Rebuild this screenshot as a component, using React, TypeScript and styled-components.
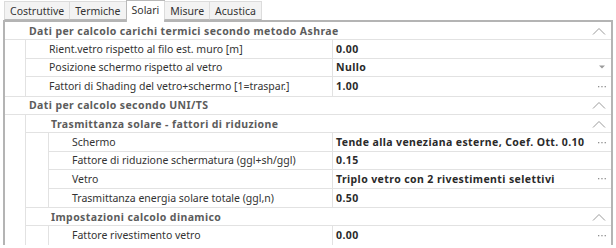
import React from "react";
import styled, { createGlobalStyle } from "styled-components";

const GlobalStyle = createGlobalStyle`
  html, body {
    margin: 0;
    padding: 0;
    background: #ffffff;
  }
  body {
    font-family: "Noto Sans", "DejaVu Sans", sans-serif;
    font-size: 10.5px;
    color: #333333;
  }
`;

const ROW_H = "18.4px";

const Page = styled.div`
  width: 616px;
  height: 248px;
  overflow: hidden;
  background: #ffffff;
  padding: 0 3px 0 3px;
  box-sizing: border-box;
`;

const TabBar = styled.div`
  display: flex;
  align-items: flex-end;
  height: 20px;
  padding-left: 1px;
  position: relative;
  z-index: 1;
`;

const Tab = styled.div<{ active?: boolean }>`
  box-sizing: border-box;
  height: ${(p) => (p.active ? "22px" : "19px")};
  padding: 0 5px;
  display: flex;
  align-items: center;
  padding-bottom: ${(p) => (p.active ? "3px" : "0")};
  background: ${(p) => (p.active ? "#ffffff" : "#f3f3f3")};
  border: 1px solid ${(p) => (p.active ? "#b9b9b9" : "#dcdcdc")};
  border-bottom: ${(p) => (p.active ? "none" : "1px solid #b9b9b9")};
  margin-right: -1px;
  margin-bottom: ${(p) => (p.active ? "-2px" : "0")};
  color: #333333;
  white-space: nowrap;
`;

const Panel = styled.div`
  border: 2px solid #b4b4b4;
  border-bottom: none;
  background: #ffffff;
`;

const Group = styled.div`
  border-bottom: 1px solid #e2e2e2;
  &:last-child {
    border-bottom: none;
  }
`;

const HeaderRow = styled.div<{ pad: number }>`
  box-sizing: border-box;
  height: ${ROW_H};
  display: flex;
  align-items: center;
  justify-content: space-between;
  padding-left: ${(p) => p.pad}px;
  padding-right: 5px;
  border-bottom: 1px solid #e2e2e2;
  font-weight: bold;
  letter-spacing: 0.4px;
  color: #5c5c5c;
  white-space: nowrap;
`;

const Body = styled.div<{ indent: number }>`
  padding-left: ${(p) => p.indent}px;
`;

const BodyInner = styled.div`
  border-left: 1px solid #e2e2e2;
`;

const Row = styled.div`
  box-sizing: border-box;
  height: ${ROW_H};
  display: flex;
  border-bottom: 1px solid #e2e2e2;
  &:last-child {
    border-bottom: none;
  }
`;

const Label = styled.div`
  flex: 1;
  display: flex;
  align-items: center;
  padding-left: 23px;
  white-space: nowrap;
  overflow: hidden;
  color: #333333;
`;

const Value = styled.div`
  width: 279px;
  box-sizing: border-box;
  border-left: 1px solid #e2e2e2;
  display: flex;
  align-items: center;
  justify-content: space-between;
  padding-left: 3px;
  padding-right: 4px;
  font-weight: bold;
  letter-spacing: 0.4px;
  color: #2a2a2a;
  white-space: nowrap;
`;

const Chevron = () => (
  <svg width="14" height="8" viewBox="0 0 14 8">
    <path d="M1 7.5 L7 1.5 L13 7.5" fill="none" stroke="#9a9a9a" strokeWidth="1" />
  </svg>
);

const DropArrow = () => (
  <svg width="10" height="4" viewBox="0 0 10 4">
    <path d="M2 0.5 L8 0.5 L5 3.5 Z" fill="#9a9a9a" />
  </svg>
);

const Dots = () => (
  <svg width="10" height="3" viewBox="0 0 10 3">
    <rect x="1" y="1" width="1.3" height="1.3" fill="#8f8f8f" />
    <rect x="4.3" y="1" width="1.3" height="1.3" fill="#8f8f8f" />
    <rect x="7.6" y="1" width="1.3" height="1.3" fill="#8f8f8f" />
  </svg>
);

type Prop = { label: string; value: string; kind?: "dots" | "drop" | "none" };

const PropRow = ({ label, value, kind = "none" }: Prop) => (
  <Row>
    <Label>{label}</Label>
    <Value>
      <span>{value}</span>
      {kind === "dots" && <Dots />}
      {kind === "drop" && <DropArrow />}
    </Value>
  </Row>
);

const tabs = ["Costruttive", "Termiche", "Solari", "Misure", "Acustica"];

export default function App() {
  return (
    <Page>
      <GlobalStyle />
      <TabBar>
        {tabs.map((t) => (
          <Tab key={t} active={t === "Solari"}>
            {t}
          </Tab>
        ))}
      </TabBar>
      <Panel>
        <Group>
          <HeaderRow pad={24}>
            <span>Dati per calcolo carichi termici secondo metodo Ashrae</span>
            <Chevron />
          </HeaderRow>
          <Body indent={20}>
            <BodyInner>
              <PropRow label="Rient.vetro rispetto al filo est. muro [m]" value="0.00" />
              <PropRow label="Posizione schermo rispetto al vetro" value="Nullo" kind="drop" />
              <PropRow label="Fattori di Shading del vetro+schermo [1=traspar.]" value="1.00" kind="dots" />
            </BodyInner>
          </Body>
        </Group>
        <Group>
          <HeaderRow pad={24}>
            <span>Dati per calcolo secondo UNI/TS</span>
            <Chevron />
          </HeaderRow>
          <Body indent={20}>
            <BodyInner>
              <Group>
                <HeaderRow pad={25}>
                  <span>Trasmittanza solare - fattori di riduzione</span>
                  <Chevron />
                </HeaderRow>
                <Body indent={22}>
                  <BodyInner>
                    <PropRow label="Schermo" value="Tende alla veneziana esterne, Coef. Ott. 0.10" kind="dots" />
                    <PropRow label="Fattore di riduzione schermatura (ggl+sh/ggl)" value="0.15" />
                    <PropRow label="Vetro" value="Triplo vetro con 2 rivestimenti selettivi" kind="dots" />
                    <PropRow label="Trasmittanza energia solare totale (ggl,n)" value="0.50" />
                  </BodyInner>
                </Body>
              </Group>
              <Group>
                <HeaderRow pad={25}>
                  <span>Impostazioni calcolo dinamico</span>
                  <Chevron />
                </HeaderRow>
                <Body indent={22}>
                  <BodyInner>
                    <PropRow label="Fattore rivestimento vetro" value="0.00" kind="dots" />
                  </BodyInner>
                </Body>
              </Group>
            </BodyInner>
          </Body>
        </Group>
      </Panel>
    </Page>
  );
}
